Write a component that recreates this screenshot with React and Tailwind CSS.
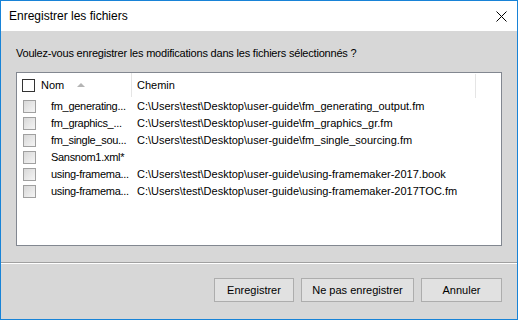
import React from 'react';

const rows = [
  { name: 'fm_generating...', path: 'C:\\Users\\test\\Desktop\\user-guide\\fm_generating_output.fm' },
  { name: 'fm_graphics_...', path: 'C:\\Users\\test\\Desktop\\user-guide\\fm_graphics_gr.fm' },
  { name: 'fm_single_sou...', path: 'C:\\Users\\test\\Desktop\\user-guide\\fm_single_sourcing.fm' },
  { name: 'Sansnom1.xml*', path: '' },
  { name: 'using-framema...', path: 'C:\\Users\\test\\Desktop\\user-guide\\using-framemaker-2017.book' },
  { name: 'using-framema...', path: 'C:\\Users\\test\\Desktop\\user-guide\\using-framemaker-2017TOC.fm' },
];

function RowCheckbox() {
  return (
    <div className="h-[13px] w-[13px] border border-[#a0a0a0] bg-gradient-to-br from-[#d8d8d8] to-[#f5f5f5]" />
  );
}

export default function App() {
  return (
    <div
      className="w-[518px] h-[320px] border border-[#1883d7] bg-[#d7d7d7] flex flex-col text-black overflow-hidden"
      style={{ fontFamily: '"Liberation Sans", Arial, sans-serif' }}
    >
      {/* Title bar */}
      <div className="h-[30px] bg-white flex items-center justify-between pl-[8px] pr-[9px]">
        <span className="text-[12px]">Enregistrer les fichiers</span>
        <svg width="11" height="11" viewBox="0 0 11 11" className="mr-[1px]">
          <path d="M0.5 0.5 L10.5 10.5 M10.5 0.5 L0.5 10.5" stroke="#000" strokeWidth="1" />
        </svg>
      </div>

      {/* Body */}
      <div className="flex-1 flex flex-col">
        <p className="pt-[15px] pl-[15px] text-[11px] leading-[14px] tracking-[-0.2px]">
          Voulez-vous enregistrer les modifications dans les fichiers sélectionnés ?
        </p>

        <div className="mt-[12px] ml-[15px] w-[486px] h-[174px] border border-[#828790] bg-white text-[11px]">
          {/* Header */}
          <div className="h-[25px] flex items-center">
            <div className="w-[114px] flex items-center pl-[5px]">
              <div className="h-[13px] w-[13px] border border-[#333333] bg-white" />
              <span className="ml-[6px]">Nom</span>
              <svg width="8" height="4" viewBox="0 0 8 4" className="ml-[13px] mt-[-2px]">
                <path d="M0 4 L4 0 L8 4 Z" fill="#b4b4b4" />
              </svg>
            </div>
            <div className="w-px h-[24px] bg-[#e5e5e5] self-start" />
            <div className="w-[343px] pl-[5px]">Chemin</div>
            <div className="w-px h-[24px] bg-[#e5e5e5] self-start mt-[1px]" />
          </div>

          {/* Rows */}
          {rows.map((r, i) => (
            <div key={i} className="h-[17px] flex items-center">
              <div className="pl-[6px] w-[34px]">
                <RowCheckbox />
              </div>
              <div className="w-[81px] whitespace-nowrap tracking-[-0.3px]">{r.name}</div>
              <div className="pl-[5px] whitespace-nowrap">{r.path}</div>
            </div>
          ))}
        </div>

        {/* Separator */}
        <div className="mt-[16px] h-px bg-[#a0a0a0]" />
        <div className="h-px bg-white" />

        {/* Buttons */}
        <div className="flex justify-end gap-[7px] pt-[14px] pr-[15px] text-[11px]">
          <button className="w-[80px] h-[24px] border border-[#adadad] bg-[#e1e1e1]">Enregistrer</button>
          <button className="w-[113px] h-[24px] border border-[#adadad] bg-[#e1e1e1]">Ne pas enregistrer</button>
          <button className="w-[81px] h-[24px] border border-[#adadad] bg-[#e1e1e1]">Annuler</button>
        </div>
      </div>
    </div>
  );
}
